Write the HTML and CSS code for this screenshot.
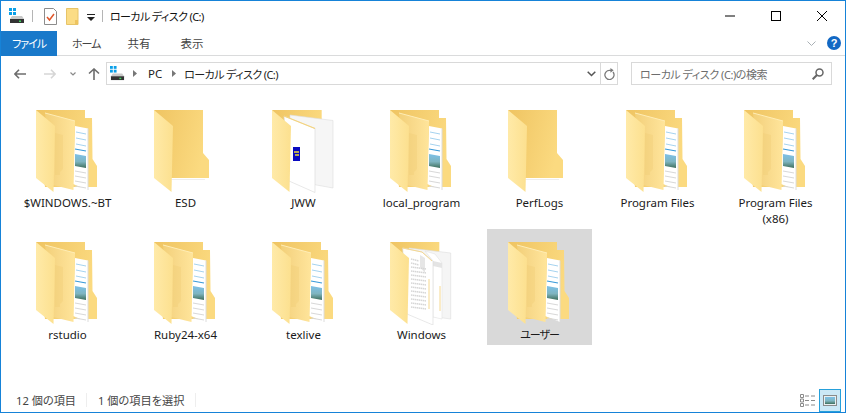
FILE: index.html
```html
<!DOCTYPE html>
<html lang="ja">
<head>
<meta charset="utf-8">
<title>ローカル ディスク (C:)</title>
<link rel="stylesheet" href="styles.css">
</head>
<body>
<svg class="defs" width="0" height="0" aria-hidden="true">
  <defs>
    <linearGradient id="gBack" x1="0" x2="1" y1="0" y2="0.3"><stop offset="0" stop-color="#efc462"/><stop offset="1" stop-color="#fbda80"/></linearGradient>
    <linearGradient id="gFlap" x1="0" x2="1" y1="0" y2="0"><stop offset="0" stop-color="#ffeaa8"/><stop offset="1" stop-color="#fce08f"/></linearGradient>
    <linearGradient id="gFlap2" x1="0" x2="1" y1="0" y2="0"><stop offset="0" stop-color="#f3d079"/><stop offset=".45" stop-color="#f8d98a"/><stop offset="1" stop-color="#ffe59b"/></linearGradient>
    <linearGradient id="gSea" x1="0" x2="0" y1="0" y2="1"><stop offset="0" stop-color="#7cc0e8"/><stop offset=".55" stop-color="#7fb5c0"/><stop offset="1" stop-color="#3f6f5c"/></linearGradient>
    <symbol id="drive" viewBox="0 0 16 16">
      <rect x="0" y="0" width="3" height="3" fill="#0a9fe8"/><rect x="4" y="0" width="3" height="3" fill="#0a9fe8"/>
      <rect x="0" y="4" width="3" height="3" fill="#0a9fe8"/><rect x="4" y="4" width="3" height="3" fill="#0a9fe8"/>
      <path d="M3 8h10l2 3v1H1v-1z" fill="#c9c9c9"/>
      <rect x="1" y="11" width="14" height="4" fill="#333"/><rect x="10" y="12.5" width="2" height="1.5" fill="#3fd45f"/>
    </symbol>
    <symbol id="folder-full" viewBox="0 0 105 84">
      <path d="M21 1H70V9H77L77.500 50L82 57V78H30Z" fill="url(#gBack)"/>
      <path d="M60 17L73 19.500V81L58 75Z" fill="#fff"/>
      <path d="M61 23l10 2M61 29l10 2M61 35l10 2" stroke="#a6d3ef" stroke-width="1"/>
      <path d="M60 40l11 2" stroke="#3a9ad9" stroke-width="1.200"/>
      <path d="M60 45L71 47V59L60 57Z" fill="url(#gSea)"/>
      <path d="M60 62l11 2M60 67l11 2M60 72l11 2M60 77l11 2" stroke="#d8d8d8" stroke-width="1"/>
      <path d="M73 19.500V81" stroke="#dcdcdc"/>
      <path d="M30 4L60 12L58.500 81L38 76Z" fill="url(#gFlap2)"/>
      <path d="M30 4L60 12" stroke="#ffedb5" fill="none"/>
      <path d="M40 24L48 26V60L45 63V66L40 66Z" fill="#efcb70" opacity=".3"/>
      <path d="M21 1L40 17L38.500 83L21 69Z" fill="url(#gFlap)"/>
    </symbol>
    <symbol id="folder-empty" viewBox="0 0 105 84">
      <path d="M21 1H70V44L76 51V69H38Z" fill="url(#gBack)"/>
      <path d="M38.500 70H72V71H38.500Z" fill="#eee"/>
      <path d="M21 1L40 17L38.500 83L21 69Z" fill="url(#gFlap)"/>
    </symbol>
    <symbol id="folder-jww" viewBox="0 0 105 84">
      <path d="M21 1H70.700V69H35Z" fill="url(#gBack)"/>
      <path d="M39 6L82 11.500V79L60 75L39 70Z" fill="#f6f6f6" stroke="#dedede" stroke-width=".6"/>
      <path d="M33 7L64 19.500V83.500L38 72Z" fill="#fff" stroke="#d8d8d8" stroke-width=".6"/>
      <path d="M33 7L64 19.500" stroke="#f5d37a" stroke-width="1.200" fill="none"/>
      <rect x="42" y="38" width="7" height="14" fill="#0a0ac0"/>
      <path d="M43 43h5M44 46h4" stroke="#f2e030" stroke-width="1.300"/>
      <path d="M21 1L40 17L38.500 83L21 69Z" fill="url(#gFlap)"/>
    </symbol>
    <symbol id="folder-docs" viewBox="0 0 105 84">
      <path d="M21 1H70.300V69H35Z" fill="url(#gBack)"/>
      <path d="M40 7L81.700 12V78L60 75L40 70Z" fill="#f5f5f5" stroke="#dedede" stroke-width=".6"/>
      <path d="M56 10L66 13L73 22V78L64 76V20Z" fill="#fff" stroke="#e2e2e2" stroke-width=".6"/>
      <path d="M64 20L73 22L73 27L64 25Z" fill="#e4e4e4"/>
      <path d="M33.700 7L53 11L64 20V84L38 73Z" fill="#fff" stroke="#d8d8d8" stroke-width=".6"/>
      <path d="M51 14L56 17V32L51 26Z" fill="#e6e6e6"/>
      <path d="M33.700 7L53 11L63 20M60 38V68M71 45V70" stroke="#f5d890" fill="none"/>
      <path d="M42 18l8 2M42 22l8 2M42 26l15 2M42 30l15 2M42 34l15 2M42 38l15 2M42 42l15 2M42 46l15 2M42 50l15 2M42 54l15 2M42 58l15 2M42 62l15 2M42 66l15 2" stroke="#d6d6d6" stroke-width="1.500" stroke-dasharray="1.500 .5"/>
      <path d="M21 1L40 17L38.500 83L21 69Z" fill="url(#gFlap)"/>
    </symbol>
  </defs>
</svg>
<div class="window">
  <header class="titlebar">
    <svg class="ic-drive"><use href="#drive"/></svg>
    <span class="qsep"></span>
    <svg class="ic-prop" viewBox="0 0 13 17"><path d="M.5.500h9l3 3v13H.500z" fill="#fff" stroke="#8c8c8c"/><path d="M3 9l2.500 3L10 6" fill="none" stroke="#e0562a" stroke-width="1.500"/></svg>
    <svg class="ic-newf" viewBox="0 0 13 17"><path d="M.5.500h11.500v16H.500z" fill="#fbdc85" stroke="#e7c468"/><path d="M9 12h3v4H9z" fill="#eec45f"/></svg>
    <svg class="ic-qdrop" viewBox="0 0 8 7"><path d="M0 0h8v1H0z M0 3h8L4 7z" fill="#222"/></svg>
    <span class="qsep qsep-b"></span>
    <span class="title kana">ローカル ディスク (C:)</span>
    <div class="winbtns">
      <button class="winbtn"><svg viewBox="0 0 10 10"><path d="M0 5h10" stroke="#000"/></svg></button>
      <button class="winbtn"><svg viewBox="0 0 10 10"><rect x=".5" y=".5" width="9" height="9" fill="none" stroke="#000"/></svg></button>
      <button class="winbtn"><svg viewBox="0 0 10 10"><path d="M0 0l10 10M10 0L0 10" stroke="#000"/></svg></button>
    </div>
  </header>
  <nav class="tabs">
    <span class="tab tab-file kana-tight">ファイル</span>
    <span class="tab tab-home kana-tight">ホーム</span>
    <span class="tab tab-share">共有</span>
    <span class="tab tab-view">表示</span>
    <svg class="ic-collapse" viewBox="0 0 9 5"><path d="M.5.500l4 4 4-4" fill="none" stroke="#a9b0b5"/></svg>
    <svg class="ic-help" viewBox="0 0 14 14"><circle cx="7" cy="7" r="7" fill="#1268c4"/><text x="7" y="11" text-anchor="middle" class="help-q">?</text></svg>
  </nav>
  <div class="navbar">
    <svg class="nav-back" viewBox="0 0 12 10"><path d="M12 5H1M5 .7L.9 5 5 9.300" fill="none" stroke="#6d6d6d" stroke-width="1.600"/></svg>
    <svg class="nav-fwd" viewBox="0 0 12 10"><path d="M0 5h11M7 .7L11.100 5 7 9.300" fill="none" stroke="#d6d6d6" stroke-width="1.600"/></svg>
    <svg class="nav-recent" viewBox="0 0 6 4"><path d="M.5.500L3 3 5.500.500" fill="none" stroke="#8a8a8a" stroke-width="1.200"/></svg>
    <svg class="nav-up" viewBox="0 0 12 12"><path d="M6 12V1M1 5.500L6 1l5 4.500" fill="none" stroke="#6d6d6d" stroke-width="1.600"/></svg>
    <div class="addr">
      <svg class="ic-drive addr-drive"><use href="#drive"/></svg>
      <svg class="crumb" viewBox="0 0 4 7"><path d="M0 0l4 3.500L0 7z" fill="#777"/></svg>
      <span class="addr-pc">PC</span>
      <svg class="crumb" viewBox="0 0 4 7"><path d="M0 0l4 3.500L0 7z" fill="#777"/></svg>
      <span class="addr-here kana">ローカル ディスク (C:)</span>
      <svg class="addr-drop" viewBox="0 0 9 6"><path d="M.7.700L4.500 4.500 8.300.700" fill="none" stroke="#555" stroke-width="1.500"/></svg>
      <span class="addr-refresh"><svg viewBox="0 0 12 13"><path d="M9.800 4.300A5 5 0 1 1 6 2.500H9" fill="none" stroke="#7a7a7a" stroke-width="1.400"/><path d="M7 0l3.500 2.500L7 5z" fill="#7a7a7a"/></svg></span>
    </div>
    <div class="search">
      <span class="search-text">ローカル ディスク (C:)の検索</span>
      <svg viewBox="0 0 12 12"><circle cx="7.500" cy="4.500" r="3.500" fill="none" stroke="#666" stroke-width="1.500"/><path d="M5 7l-4.300 4.300" stroke="#666" stroke-width="2"/></svg>
    </div>
  </div>
  <main class="files">
    <div class="item"><svg class="ficon"><use href="#folder-full"/></svg><span class="label">$WINDOWS.~BT</span></div>
    <div class="item"><svg class="ficon"><use href="#folder-empty"/></svg><span class="label">ESD</span></div>
    <div class="item"><svg class="ficon"><use href="#folder-jww"/></svg><span class="label">JWW</span></div>
    <div class="item"><svg class="ficon"><use href="#folder-full"/></svg><span class="label">local_program</span></div>
    <div class="item"><svg class="ficon"><use href="#folder-empty"/></svg><span class="label">PerfLogs</span></div>
    <div class="item"><svg class="ficon"><use href="#folder-full"/></svg><span class="label">Program Files</span></div>
    <div class="item"><svg class="ficon"><use href="#folder-full"/></svg><span class="label">Program Files (x86)</span></div>
    <div class="item"><svg class="ficon"><use href="#folder-full"/></svg><span class="label">rstudio</span></div>
    <div class="item"><svg class="ficon"><use href="#folder-full"/></svg><span class="label">Ruby24-x64</span></div>
    <div class="item"><svg class="ficon"><use href="#folder-full"/></svg><span class="label">texlive</span></div>
    <div class="item"><svg class="ficon"><use href="#folder-docs"/></svg><span class="label">Windows</span></div>
    <div class="item selected"><svg class="ficon"><use href="#folder-full"/></svg><span class="label kana-tight">ユーザー</span></div>
  </main>
  <footer class="status">
    <span class="st-count">12 個の項目</span>
    <span class="st-sep"></span>
    <span class="st-sel">1 個の項目を選択</span>
    <span class="st-sep"></span>
    <svg class="view-details" viewBox="0 0 15 13"><path d="M.5.500h3v3h-3zM.5 5h3v3h-3zM.5 9.500h3v3h-3z" fill="#fff" stroke="#8a8a8a"/><path d="M5 2h4M11 2h4M5 6.500h4M11 6.500h4M5 11h4M11 11h4" stroke="#8a8a8a"/></svg>
    <span class="view-large"><svg viewBox="0 0 14 11"><rect x=".5" y=".5" width="13" height="10" fill="#e8f0f2" stroke="#8a8a8a"/><rect x="2" y="2" width="10" height="7" fill="url(#gSea)"/></svg></span>
  </footer>
</div>
</body>
</html>
```
FILE: styles.css
```css
* { box-sizing: border-box; }
html, body { margin: 0; height: 100%; }
body { font-family: "Noto Sans", "Noto Sans CJK JP", sans-serif; font-size: 11.5px; font-feature-settings: "palt"; color: #1a1a1a; background: #fff; overflow: hidden; }
.defs { position: absolute; }
.window { height: 413px; border: 1px solid #1683d8; display: flex; flex-direction: column; background: #fff; }
.kana { font-size: 11px; letter-spacing: -.6px; }
.kana-tight { font-size: 11px; letter-spacing: -1px; }

.titlebar { height: 30px; flex: none; display: flex; align-items: center; position: relative; }
.ic-drive { width: 16px; height: 16px; display: block; flex: none; }
.titlebar .ic-drive { margin-left: 8px; margin-top: -1px; }
.qsep { width: 1px; height: 12px; background: #b5b5b5; margin-left: 7px; flex: none; }
.ic-prop { width: 13px; height: 17px; margin-left: 11px; flex: none; }
.ic-newf { width: 13px; height: 17px; margin-left: 9px; flex: none; }
.ic-qdrop { width: 8px; height: 7px; margin-left: 8px; margin-top: 3px; flex: none; }
.qsep-b { margin-left: 7px; }
.title { margin-left: 7px; color: #111; }
.winbtns { margin-left: auto; display: flex; align-self: flex-start; height: 30px; }
.winbtn { width: 46px; height: 30px; border: 0; background: none; padding: 0; display: flex; align-items: center; justify-content: center; }
.winbtn svg { width: 10px; height: 10px; display: block; }

.tabs { height: 25px; flex: none; display: flex; align-items: stretch; border-bottom: 1px solid #dadbdc; position: relative; }
.tab { display: flex; align-items: center; color: #444; padding-bottom: 1px; }
.tab-file { width: 56px; justify-content: center; background: #1979ca; color: #fff; margin-bottom: -1px; }
.tab-home { margin-left: 15px; }
.tab-share { margin-left: 27px; }
.tab-view { margin-left: 30px; }
.ic-collapse { width: 9px; height: 5px; margin-left: auto; margin-right: 11px; align-self: center; }
.ic-help { width: 14px; height: 14px; margin-right: 4px; align-self: center; }
.help-q { font: bold 11px "Liberation Sans", sans-serif; fill: #fff; }

.navbar { height: 35px; flex: none; display: flex; align-items: center; }
.nav-back { width: 12px; height: 10px; margin-left: 13px; flex: none; }
.nav-fwd { width: 12px; height: 10px; margin-left: 18px; flex: none; }
.nav-recent { width: 6px; height: 4px; margin-left: 14px; flex: none; }
.nav-up { width: 12px; height: 12px; margin-left: 12px; flex: none; }
.addr { margin-left: 6px; width: 512px; height: 23px; border: 1px solid #d9d9d9; display: flex; align-items: center; flex: none; color: #222; }
.addr-drive { margin-left: 3px; width: 15px; height: 15px; }
.crumb { width: 4px; height: 7px; margin-left: 8px; flex: none; }
.addr-pc { margin-left: 11px; margin-right: 2px; }
.addr-here { margin-left: 8px; }
.addr-drop { width: 9px; height: 6px; margin-left: auto; margin-right: 4px; flex: none; }
.addr-refresh { width: 17px; height: 21px; border-left: 1px solid #d9d9d9; display: flex; align-items: center; justify-content: center; flex: none; }
.addr-refresh svg { width: 11px; height: 12px; }
.search { margin-left: 13px; width: 201px; height: 23px; border: 1px solid #d9d9d9; display: flex; align-items: center; justify-content: space-between; padding: 0 7px 0 8px; flex: none; }
.search-text { color: #6d6d6d; font-size: 11px; letter-spacing: -.45px; }
.search svg { width: 12px; height: 12px; flex: none; }

.files { flex: 1; min-height: 0; padding: 6px 0 0 14px; display: grid; grid-template-columns: repeat(7, 105px); column-gap: 13px; grid-template-rows: 132px 116px; align-content: start; align-items: start; }
.item { display: flex; flex-direction: column; align-items: center; padding: 12px 0 2px; min-height: 116px; }
.item.selected { background: #d9d9d9; }
.ficon { width: 105px; height: 84px; display: block; flex: none; }
.label { margin-top: 2px; width: 100px; text-align: center; line-height: 16px; color: #1a1a1a; }

.status { height: 24px; flex: none; display: flex; align-items: center; color: #444; padding-left: 15px; font-size: 11.2px; }
.st-sep { width: 1px; height: 14px; background: #eee; flex: none; }
.st-count { width: 70px; }
.st-sel { margin-left: 11px; width: 97px; }
.view-details { width: 15px; height: 13px; margin-left: auto; flex: none; }
.view-large { width: 22px; height: 23px; margin: 0 4px 0 4px; background: #cbe8f6; border: 1px solid #26a0da; display: flex; align-items: center; justify-content: center; flex: none; }
.view-large svg { width: 14px; height: 11px; }
```
